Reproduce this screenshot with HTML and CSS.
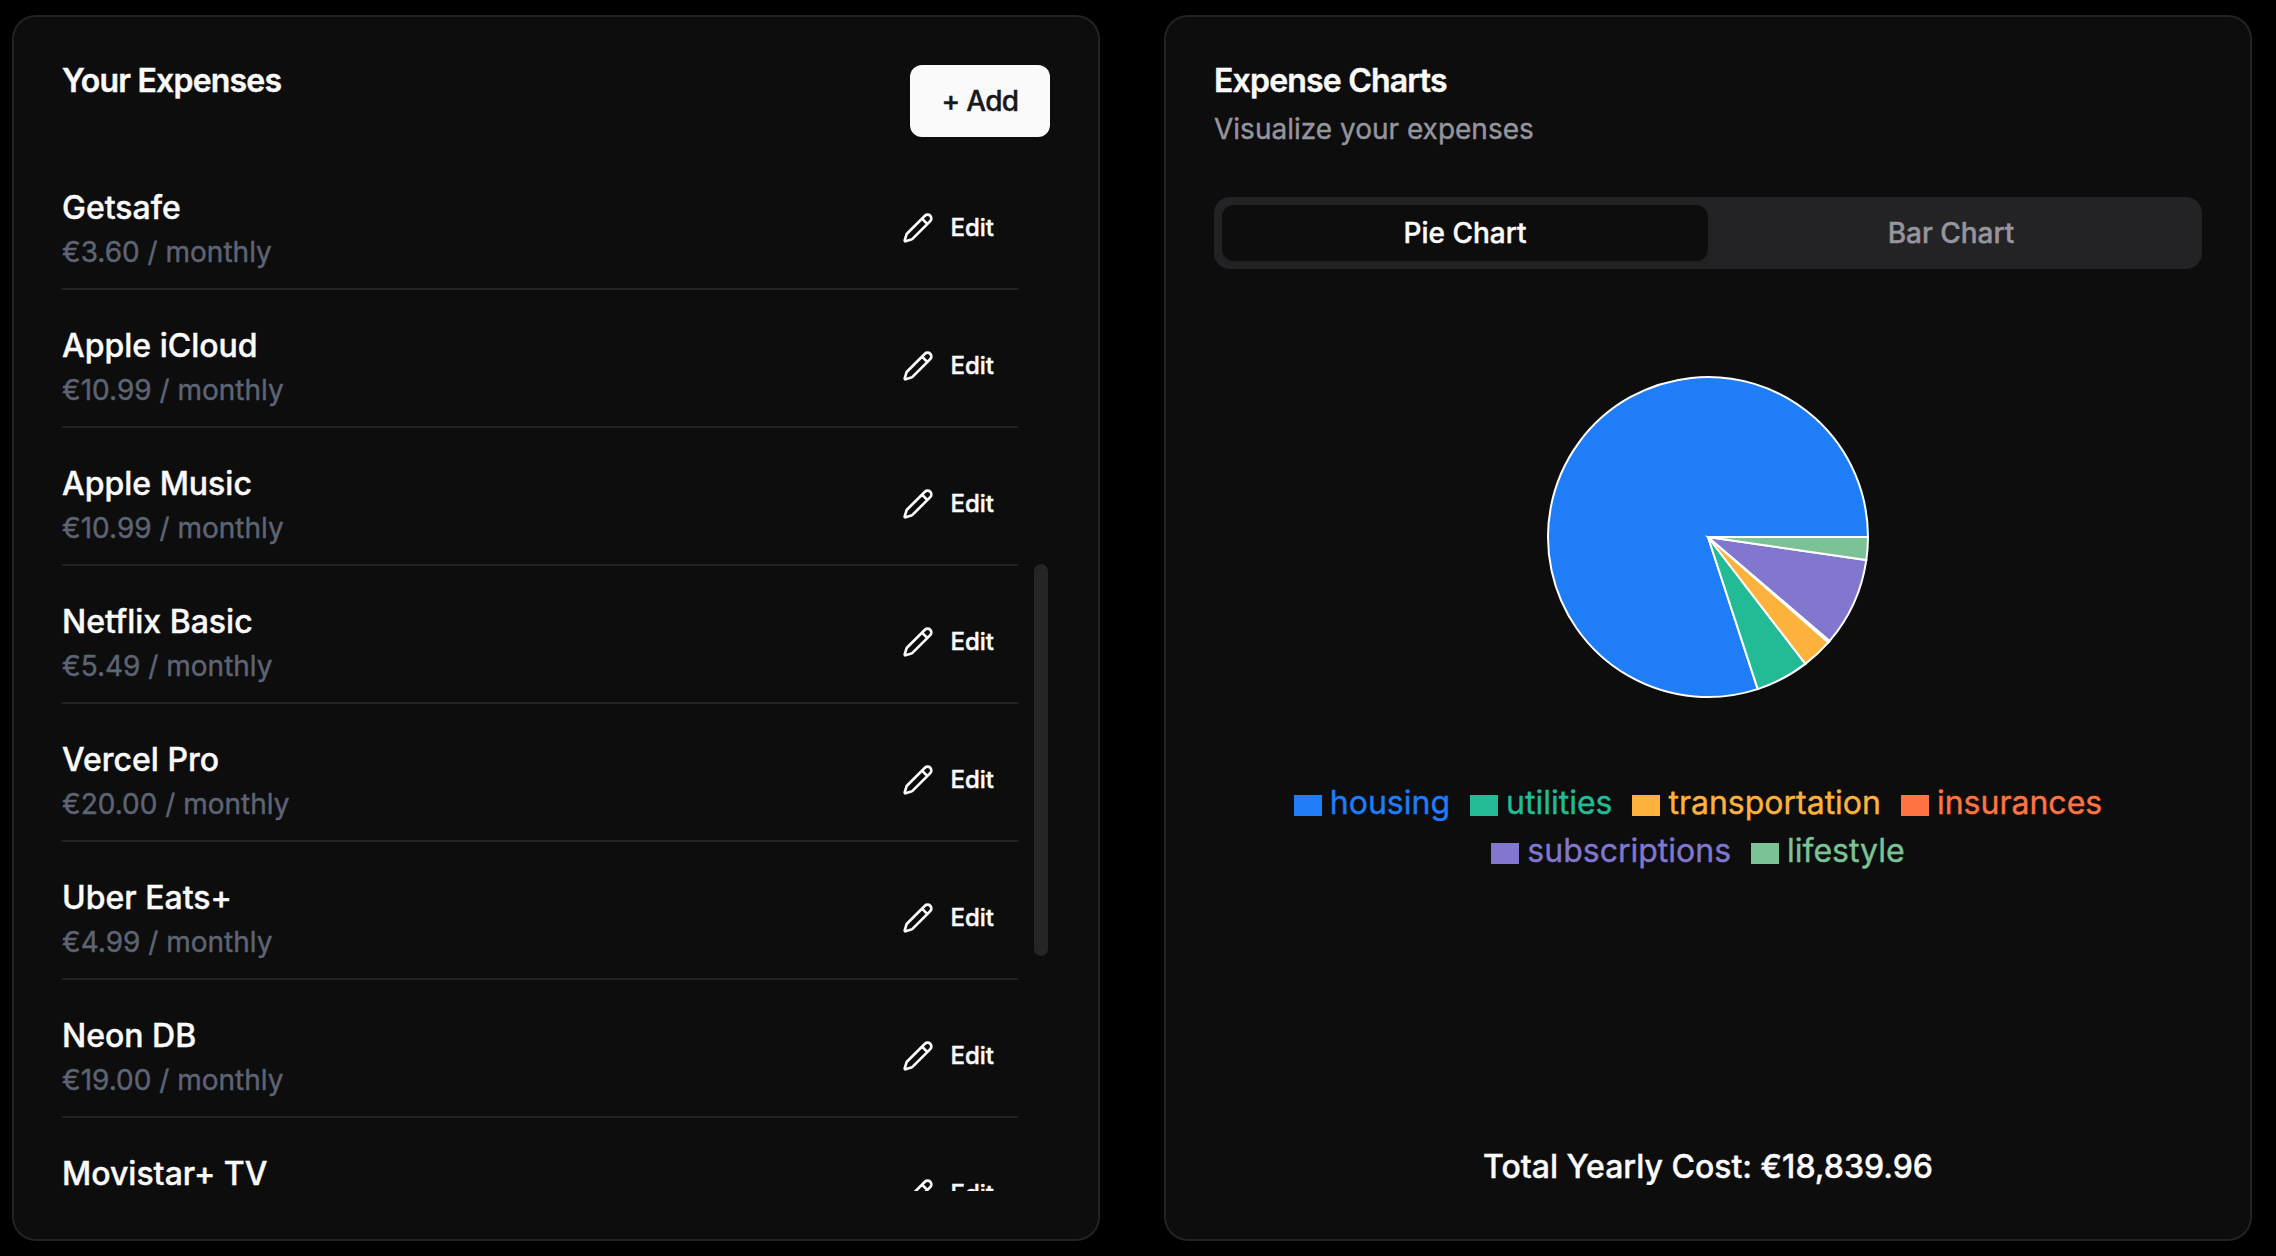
FILE: index.html
```html
<!DOCTYPE html>
<html lang="en">
<head>
<meta charset="utf-8">
<title>Expenses</title>
<link rel="stylesheet" href="styles.css">
</head>
<body>
<svg width="0" height="0" class="defs" aria-hidden="true">
  <symbol id="pencil" viewBox="0 0 24 24">
    <path d="M21.174 6.812a1 1 0 0 0-3.986-3.987L3.842 16.174a2 2 0 0 0-.5.83l-1.321 4.352a.5.5 0 0 0 .623.622l4.353-1.32a2 2 0 0 0 .83-.497zM15 5l4 4" fill="none" stroke="currentColor" stroke-width="2" stroke-linecap="round" stroke-linejoin="round"/>
  </symbol>
</svg>
<main class="page">
  <section class="card">
    <header class="card-header">
      <h2 class="title">Your Expenses</h2>
      <button class="add">+ Add</button>
    </header>
    <div class="scroll">
      <ul class="list">
        <li class="row"><div><p class="name">Getsafe</p><p class="price">€3.60 / monthly</p></div><button class="edit"><svg class="icon"><use href="#pencil"/></svg>Edit</button></li>
        <li class="row"><div><p class="name">Apple iCloud</p><p class="price">€10.99 / monthly</p></div><button class="edit"><svg class="icon"><use href="#pencil"/></svg>Edit</button></li>
        <li class="row"><div><p class="name">Apple Music</p><p class="price">€10.99 / monthly</p></div><button class="edit"><svg class="icon"><use href="#pencil"/></svg>Edit</button></li>
        <li class="row"><div><p class="name">Netflix Basic</p><p class="price">€5.49 / monthly</p></div><button class="edit"><svg class="icon"><use href="#pencil"/></svg>Edit</button></li>
        <li class="row"><div><p class="name">Vercel Pro</p><p class="price">€20.00 / monthly</p></div><button class="edit"><svg class="icon"><use href="#pencil"/></svg>Edit</button></li>
        <li class="row"><div><p class="name">Uber Eats+</p><p class="price">€4.99 / monthly</p></div><button class="edit"><svg class="icon"><use href="#pencil"/></svg>Edit</button></li>
        <li class="row"><div><p class="name">Neon DB</p><p class="price">€19.00 / monthly</p></div><button class="edit"><svg class="icon"><use href="#pencil"/></svg>Edit</button></li>
        <li class="row"><div><p class="name">Movistar+ TV</p></div><button class="edit"><svg class="icon"><use href="#pencil"/></svg>Edit</button></li>
      </ul>
      <div class="thumb"></div>
    </div>
  </section>

  <section class="card">
    <header class="chart-header">
      <h2 class="title">Expense Charts</h2>
      <p class="subtitle">Visualize your expenses</p>
    </header>
    <div class="tabs">
      <button class="tab active">Pie Chart</button>
      <button class="tab">Bar Chart</button>
    </div>
    <svg class="pie" viewBox="-162 -162 324 324">
      <g stroke="#fff" stroke-width="2">
        <path fill="#1e7df7" d="M0 0L160 0A160 160 0 1 0 49.7 152.1Z"/>
        <path fill="#22bb96" d="M0 0L49.7 152.1A160 160 0 0 0 97.4 126.9Z"/>
        <path fill="#fcb23c" d="M0 0L97.4 126.9A160 160 0 0 0 120.4 105.4Z"/>
        <path fill="#ff7442" d="M0 0L120.4 105.4A160 160 0 0 0 121.7 103.9Z"/>
        <path fill="#8177ce" d="M0 0L121.7 103.9A160 160 0 0 0 158.3 23.1Z"/>
        <path fill="#7bc397" d="M0 0L158.3 23.1A160 160 0 0 0 160 0Z"/>
      </g>
    </svg>
    <ul class="legend">
      <li class="key housing">housing</li>
      <li class="key utilities">utilities</li>
      <li class="key transportation">transportation</li>
      <li class="key insurances">insurances</li>
      <li class="key subscriptions">subscriptions</li>
      <li class="key lifestyle">lifestyle</li>
    </ul>
    <p class="total">Total Yearly Cost: €18,839.96</p>
  </section>
</main>
</body>
</html>
```
FILE: styles.css
```css
* { box-sizing: border-box; margin: 0; padding: 0; }
body { background: #000; color: #fafafa; font-family: Inter, "Liberation Sans", sans-serif; -webkit-text-stroke: 0.4px; }
button { font: inherit; color: inherit; background: none; border: 0; }
ul { list-style: none; }
.defs { display: block; }

.page {
  display: grid;
  grid-template-columns: 1088px 1088px;
  gap: 64px;
  height: 1256px;
  padding: 15px 12px;
  overflow: hidden;
}
.card {
  display: flex;
  flex-direction: column;
  min-height: 0;
  padding: 48px;
  background: #0d0d0d;
  border: 2px solid #222224;
  border-radius: 24px;
}
.title { font-size: 32px; line-height: 32px; font-weight: 600; letter-spacing: -0.8px; }

.card-header { display: flex; justify-content: space-between; align-items: flex-start; height: 119px; margin-right: -2px; flex: none; }
.add {
  width: 140px;
  height: 72px;
  background: #fafafa;
  color: #18181b;
  border-radius: 12px;
  font-size: 28px;
  line-height: 40px;
  font-weight: 500;
  letter-spacing: -0.7px;
}
.card:first-child { padding-right: 50px; }

.scroll { display: flex; flex: 1; min-height: 0; overflow: hidden; }
.list { width: 956px; }
.row {
  display: flex;
  justify-content: space-between;
  align-items: center;
  height: 106px;
  margin-bottom: 32px;
  padding-bottom: 16px;
  border-bottom: 2px solid #232325;
}
.row:last-child > div { align-self: flex-start; }
.name { font-size: 32px; line-height: 48px; font-weight: 500; }
.price { font-size: 28px; line-height: 40px; color: #5d6474; }
.edit {
  display: flex;
  align-items: center;
  gap: 16px;
  padding: 0 24px;
  font-size: 24px;
  line-height: 32px;
  font-weight: 500;
}
.icon { width: 32px; height: 32px; }
.thumb { width: 14px; height: 392px; margin: 380px 0 0 16px; background: #252527; border-radius: 7px; }

.chart-header { height: 132px; flex: none; }
.subtitle { margin-top: 12px; font-size: 28px; line-height: 40px; color: #96959e; }
.tabs { display: flex; height: 72px; padding: 8px; background: #232325; border-radius: 16px; flex: none; }
.tab { flex: 1; color: #96959e; font-size: 28px; line-height: 40px; font-weight: 500; border-radius: 12px; }
.active { background: #0d0d0d; color: #fafafa; box-shadow: 0 2px 4px rgba(0, 0, 0, .12); }

.pie { display: block; width: 324px; height: 324px; margin: 106px auto 0; flex: none; }
.legend { display: flex; flex-wrap: wrap; justify-content: center; width: 980px; margin: 80px auto 0; }
.key { display: flex; align-items: center; margin-right: 20px; font-size: 32px; line-height: 48px; }
.key::before { content: ""; width: 28px; height: 21px; margin: 4px 8px 0 0; background: currentColor; }
.housing { color: #1e7df7; }
.utilities { color: #22bb96; }
.transportation { color: #fcb23c; }
.insurances { color: #ff7442; }
.subscriptions { color: #8177ce; }
.lifestyle { color: #7bc397; }
.total { margin-top: auto; text-align: center; font-size: 32px; line-height: 48px; font-weight: 500; }
```
